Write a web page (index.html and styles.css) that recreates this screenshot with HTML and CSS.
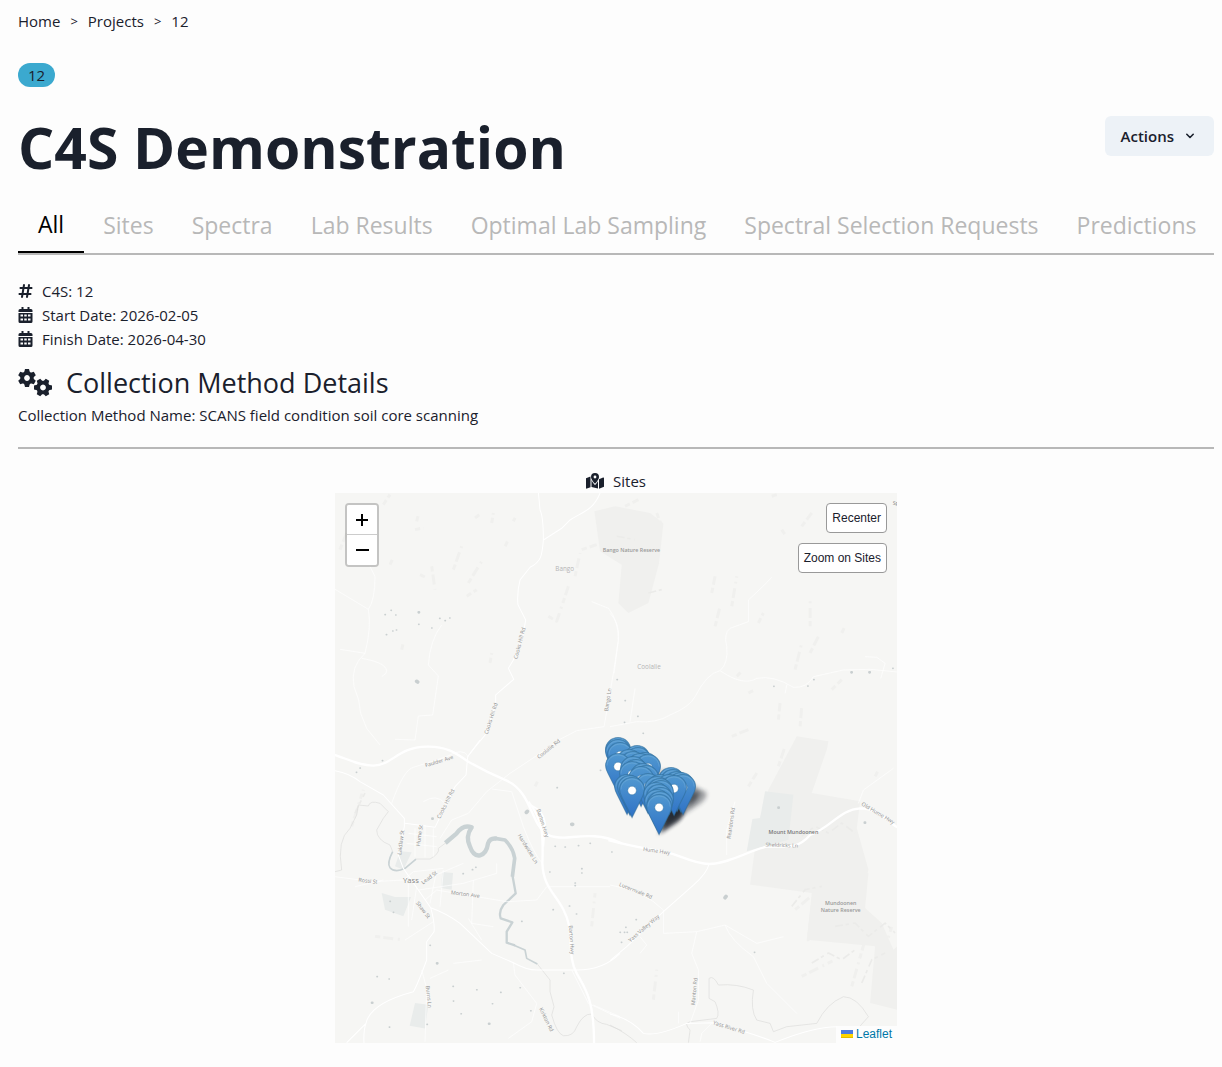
FILE: index.html
```html
<!DOCTYPE html>
<html lang="en">
<head>
<meta charset="utf-8">
<meta name="viewport" content="width=device-width, initial-scale=1">
<title>C4S Demonstration</title>
<link rel="stylesheet" href="styles.css">
</head>
<body>
<nav class="breadcrumb" aria-label="Breadcrumb">
  <a href="#">Home</a><span>&gt;</span><a href="#">Projects</a><span>&gt;</span><a href="#">12</a>
</nav>
<main>
  <span class="badge">12</span>
  <header class="title-row">
    <h1>C4S Demonstration</h1>
    <button class="actions" type="button">Actions
      <svg class="chevron" viewBox="0 0 16 16" width="16" height="16"><path d="M4.800 6.300L8 9.500L11.200 6.300"/></svg>
    </button>
  </header>
  <nav class="tabs" aria-label="Project sections">
    <a class="tab active" href="#">All</a>
    <a class="tab" href="#">Sites</a>
    <a class="tab" href="#">Spectra</a>
    <a class="tab" href="#">Lab Results</a>
    <a class="tab" href="#">Optimal Lab Sampling</a>
    <a class="tab" href="#">Spectral Selection Requests</a>
    <a class="tab" href="#">Predictions</a>
  </nav>
  <section class="details">
    <p class="row">
      <svg class="icon" viewBox="0 0 448 512"><path d="M181 32c18 3 30 20 27 37l-10 59h95l12-69c3-18 19-30 36-27s30 20 27 37l-10 59h58c18 0 32 14 32 32s-14 32-32 32h-69l-21 128h58c18 0 32 14 32 32s-14 32-32 32h-69l-11 69c-3 18-20 30-37 27s-30-20-27-37l10-59h-95l-11 69c-3 18-20 30-37 27s-30-20-27-37l10-59H32c-18 0-32-14-32-32s14-32 32-32h69l21-128H64c-18 0-32-14-32-32s14-32 32-32h69l11-69c3-18 20-30 37-27zM187 192l-21 128h95l21-128z"/></svg>
      C4S: 12</p>
    <p class="row">
      <svg class="icon" viewBox="0 0 448 512"><use href="#calendar"/></svg>
      Start Date: 2026-02-05</p>
    <p class="row">
      <svg class="icon" viewBox="0 0 448 512"><use href="#calendar"/></svg>
      Finish Date: 2026-04-30</p>
    <h2>
      <svg class="gears" viewBox="0 0 35 28">
        <g transform="translate(9 9)"><use href="#gear"/></g>
        <g transform="translate(25 18.500) rotate(30)"><use href="#gear"/></g>
      </svg>
      Collection Method Details</h2>
    <p class="row">Collection Method Name: SCANS field condition soil core scanning</p>
  </section>
  <section class="sites">
    <p class="row sites-title">
      <svg class="map-icon" viewBox="0 0 18 16">
        <path d="M0 5.200L4.500 3.500V14.200L0.900 15.600Q0 15.900 0 15zM13 6.200L17.100 4.600Q18 4.300 18 5.200V13.800L13 15.700zM5.500 7Q6.500 9.600 8.300 11.400Q9 12 9.700 11.400Q11.200 9.800 12 8V15.600L5.500 14z"/>
        <path fill-rule="evenodd" d="M9 0a4 4 0 0 1 4 4C13 6 10.500 9.200 9.500 10.300Q9 10.800 8.500 10.300C7.500 9.200 5 6 5 4A4 4 0 0 1 9 0zM9 2.600a1.400 1.400 0 1 0 0 2.800a1.400 1.400 0 1 0 0-2.800z"/>
      </svg>
      Sites</p>
    <div class="map">
      <svg class="tiles" viewBox="0 0 1686 1650" preserveAspectRatio="xMidYMid slice" role="img" aria-label="Map of sites near Yass">
        <defs>
          <linearGradient id="pinFill" x1="0" y1="0" x2="0" y2="1"><stop offset="0" stop-color="#5198d0"/><stop offset="1" stop-color="#2f72c6"/></linearGradient>
          <filter id="soft" x="-50%" y="-50%" width="200%" height="200%"><feGaussianBlur stdDeviation="2"/></filter>
          <path id="shade" filter="url(#soft)" opacity=".4" d="M0 0L8-18Q14-27 22-24Q26-19 18-12Z"/>
          <g id="pin">
            <path transform="translate(0 -41)" fill="url(#pinFill)" stroke="#2e6c97" stroke-opacity=".6" stroke-width="1" d="M0 .5C-7 .5-12.500 5.900-12.500 12.500C-12.500 16-11 18.500-9.500 21.500L0 40.500L9.500 21.500C11 18.500 12.500 16 12.500 12.500C12.500 5.900 7 .5 0 .5Z"/>
            <path d="M-11-28.500C-11-34.500-6-39-0-39S11-34.500 11-28.500" fill="none" stroke="#7db3dd" stroke-opacity=".4"/>
            <circle cy="-27.500" r="4.300" fill="#fff" stroke="#2e6c97" stroke-opacity=".5" stroke-width=".8"/>
          </g>
          <path id="calendar" fill-rule="evenodd" d="M96 0h64v64h128V0h64v64h48q48 0 48 48v48H0v-48q0-48 48-48h48zM0 192h448v272q0 48-48 48H48q-48 0-48-48zM64 240v64h80v-64zM184 240v64h80v-64zM304 240v64h80v-64zM64 368v64h80v-64zM184 368v64h80v-64zM304 368v64h80v-64z"/>
          <g id="gear">
            <circle r="4.800" fill="none" stroke="currentColor" stroke-width="3.800"/>
            <path id="teeth" d="M-2-9h4l1 4h-6zM-2 9h4l1-4h-6z"/>
            <use href="#teeth" transform="rotate(60)"/><use href="#teeth" transform="rotate(120)"/>
          </g>
        </defs>
        <rect width="1686" height="1650" fill="#f6f6f4"/>
        <!-- Reserves and parkland -->
        <g fill="#f0f0ee">
          <path d="M778 55L840 40L945 60L985 92L972 210L940 330L880 360L850 330L860 215L795 175Z"/>
          <path d="M1385 730L1480 745L1475 770L1430 900L1575 925L1565 1005L1600 1130L1590 1170L1565 1240L1420 1345L1415 1345L1430 1200L1245 1175L1270 990L1300 890Z"/>
          <path d="M1435 1170L1600 1140L1590 1245L1640 1290L1675 1370L1686 1360V1550L1605 1530L1620 1360L1415 1340Z"/>
        </g>
        <g fill="#e9eceb">
          <path d="M1290 895L1375 905L1360 1040L1235 1075L1252 978L1275 975Z"/>
          <path d="M322 1137L354 1140L350 1190L318 1185ZM140 1200L180 1212L228 1212L205 1270L150 1250ZM240 1530L280 1535L270 1606L224 1598ZM195 1075L230 1078L205 1130L180 1120Z"/>
        </g>
        <!-- Hill shading -->
        <g fill="none" stroke="#f0f0ee" stroke-width="9" stroke-dasharray="16 9 30 14 6 12" stroke-linejoin="round">
          <path d="M145 35L165 5M15 170L35 120M165 215L172 200M240 110L265 105M245 85L250 65M290 220L300 290M255 245L275 255M355 230L380 160M400 270L440 205M395 310L425 290M420 75L440 60M470 90L475 60M510 160L520 140M535 85L540 75M640 370L665 385L700 280M720 250L735 180M740 170L785 155M200 470L205 450M465 510L470 480"/>
          <path d="M870 40L910 20M965 60L980 100M1310 10L1325 5M1340 110L1350 125M1400 100L1430 60M1130 300L1140 250M1190 340L1205 250M1140 400L1155 340M1270 390L1285 360M1425 400L1425 320M1380 530L1400 450M1425 480L1455 420M1205 550L1220 535M1240 600L1260 590M1330 680L1335 630M1395 700L1400 640M1190 730L1240 710M1620 170L1640 150M1560 230L1580 200M1520 420L1530 400M1490 590L1520 560"/>
          <path d="M50 1000L85 890M600 880L610 860M770 1300L780 1200M120 1330L200 1340M1240 880L1265 840M1330 820L1350 760M1430 1030L1500 980M1290 1160L1350 1110M1380 1250L1440 1200M1400 1450L1500 1400M1550 1480L1590 1340M1640 1400L1670 1300M1510 1340L1600 1310M1450 1100L1540 1080M1620 850L1630 830M955 1520L965 1430"/>
        </g>
        <g fill="none" stroke="#ebebe9" stroke-width="5" stroke-dasharray="24 8 10 12" stroke-linejoin="round">
          <path d="M1400 1030L1440 1000L1480 1020L1520 990L1560 1020M1370 1240L1410 1190L1460 1180M1500 1300L1560 1290L1600 1330L1650 1290L1680 1320M1430 1410L1480 1380L1520 1400L1560 1370M1580 1470L1610 1400L1650 1380M845 130L900 140M940 300L980 290M60 960L90 900"/>
        </g>
        <!-- Upper left roads -->
        <g transform="translate(-15 -99)" fill="none" stroke="#fff" stroke-width="3">
          <path d="M625 99L630 150Q640 170 640 240C636 285 635 305 600 322L570 360Q560 400 564 435L587 480L578 530L550 600L535 625L551 658L497 705V735L465 825L420 880"/>
          <path d="M810 99C790 150 760 155 720 180L695 205L640 240"/>
          <path stroke-width="2" d="M15 388L115 448Q135 420 135 350L120 320M115 448Q125 500 105 580Q60 620 72 680Q90 720 92 760L110 805L150 855M30 568L105 580M95 595Q180 610 168 640L155 650M335 495Q300 540 295 615L325 648L308 765L265 768L255 840L195 838M785 425L835 445Q865 480 865 540L850 640L822 800L740 812L690 838L620 890"/>
        </g>
        <!-- Upper right roads -->
        <g transform="translate(825 -99)" fill="none" stroke="#fff" stroke-width="2">
          <path d="M485 352L460 378L415 420V485L360 505Q340 520 350 560Q355 610 330 632Q290 640 255 710Q240 740 180 765Q140 790 80 785L0 800M330 632Q400 680 440 655Q490 645 550 682Q590 685 610 650L700 630L780 628L861 636M525 700L530 675M765 590L800 592L825 610L812 655M75 685L60 785M0 460Q30 490 25 540L12 640"/>
        </g>
        <!-- Lower left: highways, rivers and town streets -->
        <g transform="translate(-15 741)" fill="none" stroke="#fff" stroke-width="3" stroke-linejoin="round">
          <g stroke="#c9d2d4">
            <path stroke-width="13" d="M346 309L380 280Q400 252 425 262Q405 290 420 320Q430 350 450 346Q470 340 474 310Q480 293 500 296"/>
            <path stroke-width="11" d="M495 295L525 300Q550 325 554 355L547 410"/>
            <path stroke-width="7" d="M547 405L557 460L520 495Q505 515 512 535L547 547L530 575V608L555 616"/>
            <path stroke-width="5" d="M550 615L585 630L590 655L622 672"/>
            <path stroke-width="5" d="M188 335Q170 370 180 383Q195 400 225 385L258 357"/>
          </g>
          <path stroke="#dddddb" stroke-width="2" d="M622 672L660 720V755L672 800L665 825Q680 880 700 887Q730 890 740 860Q760 820 785 822Q800 850 830 853L875 872M258 357H300Q330 340 325 325L348 308M188 335L180 315Q140 300 140 270L160 235L175 215L150 190Q120 180 115 198L85 195L80 225L60 265Q20 300 35 390L15 395"/>
          <path stroke-width="7" d="M10 43C60 60 90 77 130 77C190 75 200 22 290 20C360 18 390 50 415 65C450 85 490 105 530 122C590 150 600 215 625 255C645 290 670 292 700 293C740 292 800 275 875 310"/>
          <path stroke-width="7" d="M595 185C640 240 640 290 637 370C640 460 700 470 718 560C725 620 718 660 740 700C765 745 792 775 792 912"/>
          <path stroke-width="5" d="M600 195Q640 210 645 250L640 320"/>
          <path d="M450 0L413 50L408 105L375 140L345 200L315 262L225 250M15 92Q60 100 90 125L160 165L223 235V260L205 345L220 385L302 503Q350 520 390 550L485 640L550 668Q590 690 620 690H740Q820 690 870 640M302 503Q315 550 312 575L290 605V660Q260 740 250 755Q120 790 108 850Q100 870 102 910M108 850L50 908"/>
          <path stroke-width="2" d="M185 190Q220 90 250 82L350 50Q400 20 415 50M415 220L365 240L330 295M415 220L470 155L540 100L690 0M485 147L545 155L580 260Q610 340 637 370M280 185Q320 160 345 190M255 265V350M285 255V352M310 265V350M235 280L320 290M230 310L320 320M75 440L160 420M15 410L130 425L220 420M220 420L250 395L340 385M250 430L330 400L400 370M265 450L400 430L500 400V370M285 480L320 450L530 485L620 480L650 440L840 440M225 600L310 545M235 430V560M260 440L245 540M320 390L300 490M340 390L330 500M430 420L425 550L490 560M415 535L455 600M275 690L290 745L285 905M300 715L355 690M455 660L370 670M550 668L555 705L620 790L605 845L535 895M725 690L775 790L870 835M790 795L870 830"/>
        </g>
        <!-- Lower right roads -->
        <g transform="translate(825 741)" fill="none" stroke="#fff" stroke-width="3" stroke-linejoin="round">
          <path stroke="#dddddb" stroke-width="2" d="M235 908L240 870Q220 850 240 845L320 835Q330 820 315 785L297 775V715Q310 705 325 735Q380 730 430 750Q420 810 440 840L480 850L490 875L530 860L620 850Q650 790 700 770Q740 770 775 830L750 858M0 855Q50 880 80 908"/>
          <path stroke-width="7" d="M-5 300C70 320 110 325 170 337C210 345 250 372 297 372C360 370 420 330 470 320C530 318 560 330 600 285C660 265 690 208 750 205C800 205 830 240 861 262"/>
          <path d="M297 372Q290 400 250 435L160 515L50 620L0 662M0 822Q60 835 100 880Q140 890 230 850L310 848Q430 880 495 907Q610 860 680 860"/>
          <path stroke-width="2" d="M350 345V270L375 185M0 435Q100 450 160 510V580L260 575L345 555L440 610L520 590M345 555Q360 600 430 650L470 730L560 820M260 575L245 640L265 690V780L240 850M745 190L760 150L850 85M90 590L110 615L90 640M205 815V850M270 905L275 880L305 850"/>
        </g>
        <!-- Farm dams -->
        <g fill="none" stroke="#c9cfd0" stroke-width="5" stroke-linecap="round">
          <path d="M150 365h1M168 352h1M182 366h1M173 414h1M184 411h1M154 425h1M290 405h1M314 376h1M330 383h1M344 375h1M251 394h1M846 560h1M870 623h1M908 670h1M868 688h1M924 721h1M1316 580h1M1418 579h1M1436 560h1M1603 537h1M1673 526h1"/>
          <path d="M64 838h1M75 825h1M142 803h1M165 1225h1M175 1258h1M285 1357h1M126 1451h1M162 1458h1M163 1602h1M276 1594h1M354 1480h1M355 1524h1M378 1562h1M425 1490h1M472 1532h1M497 1498h1M555 1484h1M587 1553h1M654 1250h1M703 1239h1M724 1263h1M720 1170h1M720 1178h1M740 1127h1M740 1140h1M644 1137h1M660 1060h1M690 1062h1M730 1058h1M765 1051h1M830 1077h1M384 1142h1M412 1130h1M422 1123h1M560 1285h1M686 1441h1M796 832h1M666 884h1M855 1318h1M868 1318h1M876 1318h1M872 1303h1M903 1280h1M859 1348h1M1258 1378h1"/>
          <path stroke-width="8" d="M251 358h1M292 977h1M111 1529h1M306 1411h1M462 1592h1M1330 944h1M1589 989h1M1549 538h1M1603 538h1"/>
          <path stroke-width="11" d="M245 565l3 2M574 958l3-3M710 994h3M1170 1214l3-4"/>
        </g>
        <!-- Place and road names -->
        <g class="labels">
          <g class="place"><text x="689" y="235">Bango</text><text x="942" y="528">Coolalie</text></g>
          <g class="reserve"><text x="889" y="178">Bango Nature Reserve</text><text x="1517" y="1235">Mundoonen</text><text x="1517" y="1257">Nature Reserve</text><text x="1375" y="1022" class="dark">Mount Mundoonen</text><text x="1682" y="36">Sp</text></g>
          <text class="town" x="228" y="1170">Yass</text>
          <g class="road">
            <text transform="translate(559 452) rotate(-75)">Cooks Hill Rd</text>
            <text transform="translate(473 678) rotate(-72)">Cooks Hill Rd</text>
            <text transform="translate(337 935) rotate(-63)">Cooks Hill Rd</text>
            <text transform="translate(824 621) rotate(-82)">Bango Ln</text>
            <text transform="translate(644 772) rotate(-39)">Coolalie Rd</text>
            <text transform="translate(314 810) rotate(-17)">Faulder Ave</text>
            <text transform="translate(203 1049) rotate(-83)">Laidlaw St</text>
            <text transform="translate(259 1028) rotate(-82)">Hume St</text>
            <text transform="translate(286 1158) rotate(-37)">Lead St</text>
            <text transform="translate(98 1169) rotate(7)">Rossi St</text>
            <text transform="translate(390 1209) rotate(7)">Morton Ave</text>
            <text transform="translate(260 1254) rotate(52)">Shaw St</text>
            <text transform="translate(618 992) rotate(72)">Barton Hwy</text>
            <text transform="translate(574 1070) rotate(58)">Hardwicke Ln</text>
            <text transform="translate(704 1341) rotate(86)">Barton Hwy</text>
            <text transform="translate(276 1512) rotate(84)">Burns Ln</text>
            <text transform="translate(629 1582) rotate(64)">Kirkton Rd</text>
            <text transform="translate(964 1079) rotate(8)">Hume Hwy</text>
            <text transform="translate(900 1198) rotate(22)">Lucernvale Rd</text>
            <text transform="translate(930 1310) rotate(-41)">Yass Valley Way</text>
            <text transform="translate(1193 991) rotate(-82)">Reardons Rd</text>
            <text transform="translate(1340 1062) rotate(2)">Sheldricks Ln</text>
            <text transform="translate(1626 965) rotate(31)">Old Hume Hwy</text>
            <text transform="translate(1083 1496) rotate(-84)">Manton Rd</text>
            <text transform="translate(1180 1608) rotate(17)">Yass River Rd</text>
          </g>
        </g>
        <!-- Site markers, drawn north to south -->
        <g transform="scale(3) translate(-335 -493)">
          <use href="#shade" x="647" y="795"/><use href="#shade" x="671" y="808"/><use href="#shade" x="677" y="812"/><use href="#shade" x="683" y="815"/><use href="#shade" x="674" y="816"/><use href="#shade" x="662" y="817"/><use href="#shade" x="660" y="822"/><use href="#shade" x="661" y="826"/><use href="#shade" x="660" y="830"/><use href="#shade" x="658" y="835"/><use href="#shade" x="659" y="833"/><use href="#shade" x="661" y="832"/><use href="#shade" x="662" y="829"/><use href="#shade" x="640" y="800"/>
          <use href="#pin" x="618" y="778"/><use href="#pin" x="618" y="780"/><use href="#pin" x="620" y="783"/><use href="#pin" x="637" y="786"/><use href="#pin" x="638" y="788"/><use href="#pin" x="629" y="790"/><use href="#pin" x="633" y="792"/><use href="#pin" x="645" y="793"/><use href="#pin" x="640" y="794"/><use href="#pin" x="648" y="795"/><use href="#pin" x="618" y="794"/>
          <use href="#pin" x="633" y="797"/><use href="#pin" x="636" y="800"/><use href="#pin" x="632" y="802"/><use href="#pin" x="643" y="804"/><use href="#pin" x="646" y="806"/><use href="#pin" x="641" y="807"/><use href="#pin" x="671" y="808"/><use href="#pin" x="673" y="810"/><use href="#pin" x="677" y="812"/><use href="#pin" x="681" y="813"/><use href="#pin" x="683" y="815"/>
          <use href="#pin" x="648" y="814"/><use href="#pin" x="660" y="815"/><use href="#pin" x="669" y="815"/><use href="#pin" x="674" y="816"/><use href="#pin" x="627" y="815"/><use href="#pin" x="630" y="816"/><use href="#pin" x="632" y="818"/>
          <use href="#pin" x="657" y="817"/><use href="#pin" x="660" y="819"/><use href="#pin" x="661" y="821"/><use href="#pin" x="656" y="823"/><use href="#pin" x="659" y="825"/><use href="#pin" x="661" y="828"/><use href="#pin" x="657" y="830"/><use href="#pin" x="660" y="832"/><use href="#pin" x="659" y="835"/>
        </g>
      </svg>
      <div class="zoom">
        <button type="button" aria-label="Zoom in"><svg viewBox="0 0 14 14" width="14" height="14"><path d="M6 1h2v5h5v2H8v5H6V8H1V6h5z"/></svg></button>
        <button type="button" aria-label="Zoom out"><svg viewBox="0 0 14 14" width="14" height="14"><path d="M1 6h13v2H1z"/></svg></button>
      </div>
      <div class="map-actions">
        <button type="button">Recenter</button>
        <button type="button">Zoom on Sites</button>
      </div>
      <a class="attribution" href="#"><svg viewBox="0 0 12 8" width="12" height="8"><path fill="#4c7be1" d="M0 0h12v4H0z"/><path fill="#ffd500" d="M0 4h12v3H0z"/><path fill="#e0bc00" d="M0 7h12v1H0z"/></svg>Leaflet</a>
    </div>
  </section>
</main>
</body>
</html>
```
FILE: styles.css
```css
* { box-sizing: border-box; }
body {
  margin: 0;
  padding: 9px 8px 24px 18px;
  background: #fdfdfd;
  color: #1a202c;
  font: 15px/24px "Segoe UI", "Open Sans", sans-serif;
}
h1, h2, p { margin: 0; }
a { color: inherit; text-decoration: none; }
button { font: inherit; color: inherit; cursor: pointer; }
svg { fill: currentColor; flex: none; }

.breadcrumb { display: flex; gap: 10px; margin-bottom: 30px; }
.breadcrumb span { font-size: 13px; }

.badge {
  display: block;
  width: fit-content;
  padding: 0 10px;
  border-radius: 12px;
  background: #3ba9cf;
}

.title-row {
  display: flex;
  justify-content: space-between;
  align-items: flex-start;
  padding-top: 24px;
}
h1 { font-size: 57px; line-height: 72px; font-weight: 700; }
.actions {
  display: flex;
  align-items: center;
  gap: 8px;
  height: 40px;
  margin-top: 5px;
  padding: 0 16px;
  border: 0;
  border-radius: 6px;
  background: #edf2f7;
  font-weight: 600;
}
.chevron {
  fill: none;
  stroke: currentColor;
  stroke-width: 1.6;
  stroke-linecap: round;
  stroke-linejoin: round;
}

.tabs {
  display: flex;
  margin-top: 14px;
  border-bottom: 2px solid #b8b8b8;
}
.tab {
  padding: 9px 19px;
  color: #b8b8b8;
  font-size: 23px;
  line-height: 38px;
  white-space: nowrap;
}
.tab.active { padding: 8px 20px; border-bottom: 2px solid #000; color: #000; }

.details { padding: 24px 0 20px; border-bottom: 2px solid #b8b8b8; }
.row { display: flex; align-items: center; gap: 9px; }
.icon { width: 15px; height: 16px; }
h2 {
  display: flex;
  align-items: center;
  gap: 13px;
  margin-top: 12px;
  font-size: 27px;
  line-height: 40px;
  font-weight: 400;
}
.gears { width: 35px; height: 28px; }

.sites { padding-top: 20px; }
.sites-title { justify-content: center; }
.map-icon { width: 18px; height: 16px; }

.map {
  position: relative;
  width: 47%;
  height: 550px;
  margin: 0 auto;
  overflow: hidden;
  font: 12px/16px "Liberation Sans", Arial, sans-serif;
}
.tiles { display: block; width: 100%; height: 100%; }
.labels { font-family: "Open Sans", sans-serif; text-anchor: middle; fill: #999; }
.place { font-size: 19px; fill: #b5b5b5; }
.reserve { font-size: 16px; font-weight: 600; }
.dark { fill: #777; }
.town { font-size: 23px; fill: #888; }
.road { font-size: 16px; fill: #8c8c8c; }

.zoom {
  position: absolute;
  top: 10px;
  left: 10px;
  display: flex;
  flex-direction: column;
  border: 2px solid rgba(0, 0, 0, .2);
  border-radius: 4px;
  background-clip: padding-box;
}
.zoom button {
  display: flex;
  align-items: center;
  justify-content: center;
  width: 30px;
  height: 30px;
  padding: 0;
  border: 0;
  background: #fff;
  color: #000;
}
.zoom button:first-child { border-bottom: 1px solid #ccc; border-radius: 2px 2px 0 0; }
.zoom button:last-child { border-radius: 0 0 2px 2px; }

.map-actions {
  position: absolute;
  top: 10px;
  right: 10px;
  display: flex;
  flex-direction: column;
  align-items: flex-end;
  gap: 10px;
}
.map-actions button {
  height: 30px;
  padding: 0 5px;
  border: 1px solid #999;
  border-radius: 4px;
  background: #fff;
}

.attribution {
  position: absolute;
  right: 0;
  bottom: 0;
  display: flex;
  align-items: center;
  gap: 3px;
  padding: 0 5px 1px;
  background: rgba(255, 255, 255, .8);
  color: #0078a8;
}
```
